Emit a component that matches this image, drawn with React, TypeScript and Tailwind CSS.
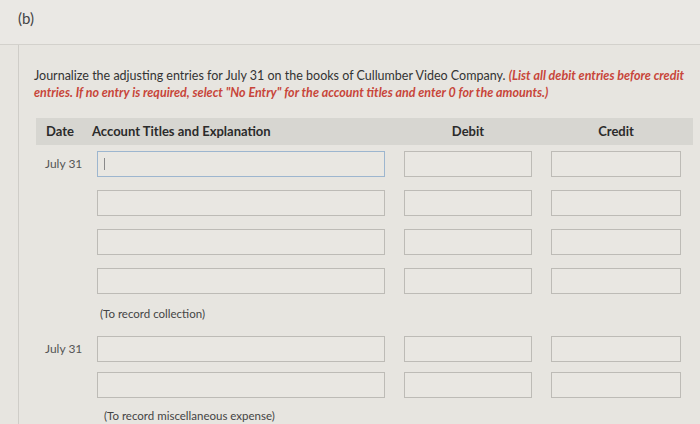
import React from "react";

const Box = ({ w, focused }: { w: string; focused?: boolean }) => (
  <div
    className={
      w +
      " h-[26px] bg-[#e9e7e2] border " +
      (focused
        ? "border-[#9db6cf] border-[1.5px] flex items-center pl-[6px]"
        : "border-[#bdbbb6]")
    }
  >
    {focused && <span className="block w-[1px] h-[12px] bg-[#8a8a8a]" />}
  </div>
);

const Row = ({ date, focused }: { date?: string; focused?: boolean }) => (
  <div className="flex items-center h-[26px]">
    <div className="w-[61px] pl-[9px] text-[12px] text-[#555] whitespace-nowrap">{date ?? ""}</div>
    <Box w="w-[288px]" focused={focused} />
    <div className="w-[19px]" />
    <Box w="w-[128px]" />
    <div className="w-[19px]" />
    <Box w="w-[130px]" />
  </div>
);

export default function App() {
  return (
    <div
      className="w-[700px] h-[424px] overflow-hidden bg-[#e7e5e0] text-[#333]"
      style={{ fontFamily: "Lato, 'Open Sans', sans-serif" }}
    >
      <div className="h-[45px] border-b border-[#d3d1cc] pl-[18px] pt-[6px] bg-[#eae8e4]">
        <span className="text-[15px] text-[#444]">(b)</span>
      </div>
      <div className="ml-[18px] border-l border-[#cfcdc8] pl-[15px] pt-[22px] h-[379px]">
        <p className="text-[12.5px] leading-[17px] whitespace-nowrap">
          Journalize the adjusting entries for July 31 on the books of Cullumber Video Company.{" "}
          <span className="italic font-bold text-[#c8453a]">(List all debit entries before credit</span>
          <br />
          <span className="italic font-bold text-[#c8453a]">
            entries. If no entry is required, select "No Entry" for the account titles and enter 0 for the amounts.)
          </span>
        </p>
        <div className="mt-[17px] ml-[2px] w-[657px] h-[27px] bg-[#d7d6d1] flex items-center text-[13px] font-bold text-[#2b2b2b]">
          <div className="w-[56px] pl-[10px]">Date</div>
          <div className="w-[293px]">Account Titles and Explanation</div>
          <div className="w-[19px]" />
          <div className="w-[128px] text-center">Debit</div>
          <div className="w-[19px]" />
          <div className="w-[130px] text-center">Credit</div>
        </div>
        <div className="ml-[2px] pt-[6px] flex flex-col gap-[13px]">
          <Row date="July 31" focused />
          <Row />
          <Row />
          <Row />
        </div>
        <div className="ml-[66px] mt-[11px] text-[11.5px] text-[#444]">(To record collection)</div>
        <div className="ml-[2px] mt-[14px] flex flex-col gap-[10px]">
          <Row date="July 31" />
          <Row />
        </div>
        <div className="ml-[70px] mt-[9px] text-[11.5px] text-[#444]">(To record miscellaneous expense)</div>
      </div>
    </div>
  );
}
